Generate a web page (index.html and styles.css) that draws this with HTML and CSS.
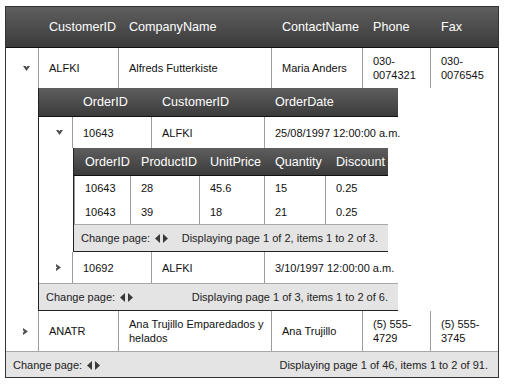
FILE: index.html
```html
<!DOCTYPE html>
<html lang="en">
<head>
    <meta charset="UTF-8">
    <meta name="viewport" content="width=device-width, initial-scale=1.0">
    <title>Customers - hierarchy grid</title>
    <link rel="stylesheet" href="styles.css">
</head>
<body>
    <div class="page">
        <table class="grid master">
            <thead>
                <tr>
                    <th class="m-expand"></th>
                    <th class="m-cust">CustomerID</th>
                    <th class="m-comp">CompanyName</th>
                    <th class="m-contact">ContactName</th>
                    <th class="m-phone">Phone</th>
                    <th class="m-fax">Fax</th>
                </tr>
            </thead>
            <tbody>
                <tr class="row">
                    <td class="expand"><svg class="ico" width="7" height="5" viewBox="0 0 7 5"><path d="M0 0h2.6l.9 1.3.9-1.3H7L3.5 5z"/></svg></td>
                    <td>ALFKI</td>
                    <td>Alfreds Futterkiste</td>
                    <td>Maria Anders</td>
                    <td>030-0074321</td>
                    <td>030-0076545</td>
                </tr>
                <tr class="detail">
                    <td class="gap"></td>
                    <td class="holder" colspan="5">
                        <!-- orders of ALFKI -->
                        <table class="grid orders">
                            <thead>
                                <tr>
                                    <th class="o-expand"></th>
                                    <th class="o-order">OrderID</th>
                                    <th class="o-cust">CustomerID</th>
                                    <th class="o-date">OrderDate</th>
                                </tr>
                            </thead>
                            <tbody>
                                <tr class="row">
                                    <td class="expand"><svg class="ico" width="7" height="5" viewBox="0 0 7 5"><path d="M0 0h2.6l.9 1.3.9-1.3H7L3.5 5z"/></svg></td>
                                    <td>10643</td>
                                    <td>ALFKI</td>
                                    <td>25/08/1997 12:00:00 a.m.</td>
                                </tr>
                                <tr class="detail">
                                    <td class="gap"></td>
                                    <td class="holder" colspan="3">
                                        <!-- order details of 10643 -->
                                        <table class="grid items">
                                            <thead>
                                                <tr>
                                                    <th class="i-order">OrderID</th>
                                                    <th class="i-prod">ProductID</th>
                                                    <th class="i-price">UnitPrice</th>
                                                    <th class="i-qty">Quantity</th>
                                                    <th class="i-disc">Discount</th>
                                                </tr>
                                            </thead>
                                            <tbody>
                                                <tr class="row">
                                                    <td>10643</td>
                                                    <td>28</td>
                                                    <td>45.6</td>
                                                    <td>15</td>
                                                    <td>0.25</td>
                                                </tr>
                                                <tr class="row">
                                                    <td>10643</td>
                                                    <td>39</td>
                                                    <td>18</td>
                                                    <td>21</td>
                                                    <td>0.25</td>
                                                </tr>
                                                <tr>
                                                    <td class="pager" colspan="5">
                                                        <div class="pager-bar">
                                                            <span>Change page: <span class="nav"><svg width="5" height="9" viewBox="0 0 5 9"><path d="M5 0v9L0 4.5z"/></svg><svg width="5" height="9" viewBox="0 0 5 9"><path d="M0 0v9l5-4.5z"/></svg></span></span>
                                                            <span>Displaying page 1 of 2, items 1 to 2 of 3.</span>
                                                        </div>
                                                    </td>
                                                </tr>
                                            </tbody>
                                        </table>
                                    </td>
                                </tr>
                                <tr class="row">
                                    <td class="expand"><svg class="ico" width="5" height="7" viewBox="0 0 5 7"><path d="M0 0l5 3.5L0 7V4.4l1.3-.9L0 2.6z"/></svg></td>
                                    <td>10692</td>
                                    <td>ALFKI</td>
                                    <td>3/10/1997 12:00:00 a.m.</td>
                                </tr>
                                <tr>
                                    <td class="pager" colspan="4">
                                        <div class="pager-bar">
                                            <span>Change page: <span class="nav"><svg width="5" height="9" viewBox="0 0 5 9"><path d="M5 0v9L0 4.5z"/></svg><svg width="5" height="9" viewBox="0 0 5 9"><path d="M0 0v9l5-4.5z"/></svg></span></span>
                                            <span>Displaying page 1 of 3, items 1 to 2 of 6.</span>
                                        </div>
                                    </td>
                                </tr>
                            </tbody>
                        </table>
                    </td>
                </tr>
                <tr class="row">
                    <td class="expand"><svg class="ico" width="5" height="7" viewBox="0 0 5 7"><path d="M0 0l5 3.5L0 7V4.4l1.3-.9L0 2.6z"/></svg></td>
                    <td>ANATR</td>
                    <td>Ana Trujillo Emparedados y helados</td>
                    <td>Ana Trujillo</td>
                    <td>(5) 555-4729</td>
                    <td>(5) 555-3745</td>
                </tr>
                <tr>
                    <td class="pager main-pager" colspan="6">
                        <div class="pager-bar">
                            <span>Change page: <span class="nav"><svg width="5" height="9" viewBox="0 0 5 9"><path d="M5 0v9L0 4.5z"/></svg><svg width="5" height="9" viewBox="0 0 5 9"><path d="M0 0v9l5-4.5z"/></svg></span></span>
                            <span>Displaying page 1 of 46, items 1 to 2 of 91.</span>
                        </div>
                    </td>
                </tr>
            </tbody>
        </table>
    </div>
</body>
</html>
```

FILE: styles.css
```css
body { margin: 0; font-family: "Liberation Sans", Arial, sans-serif; background: #fff; color: #111; }
.page { padding: 6px 0 0 5px; }

.grid { border-collapse: separate; border-spacing: 0; table-layout: fixed; font-size: 11px; }
.grid th, .grid td { box-sizing: border-box; padding: 0; }
.grid th { background: linear-gradient(#5e5e5e, #3b3b3b); color: #fff; font-weight: normal; font-size: 12.6px; text-align: left; padding-left: 11px; white-space: nowrap; border-bottom: 1px solid #111; }
.grid td { border-left: 1px solid #9c9c9c; padding: 0 4px 0 10px; line-height: 14px; vertical-align: middle; }
.grid td.expand, .grid td.gap, .grid td.holder, .grid td.pager { border-left: none; }
.grid td.expand { padding-left: 17px; }
.grid td.holder { padding: 0; vertical-align: top; }
.ico { display: block; fill: #505050; }

/* master: customers */
.master { width: 494px; border: 1px solid #333; }
.master th { height: 41px; }
.master > tbody > .row > td { height: 40px; }
.m-expand { width: 32px; }
.m-cust { width: 80px; }
.m-comp { width: 153px; }
.m-contact { width: 91px; }
.m-phone { width: 68px; }
.m-fax { width: 68px; }

/* orders */
.orders { width: 360px; border-left: 1px solid #222; border-bottom: 1px solid #222; }
.orders th { height: 29px; }
.orders > tbody > .row > td { height: 31px; white-space: nowrap; }
.o-expand { width: 33px; }
.o-order { width: 79px; }
.o-cust { width: 113px; }
.o-date { width: 134px; }

/* order details */
.items { width: 315px; margin-left: 1px; border-left: 1px solid #222; border-bottom: 1px solid #222; }
.items th { height: 28px; }
.items .row td { height: 24px; }
.i-order { width: 56px; }
.i-prod { width: 69px; }
.i-price { width: 65px; }
.i-qty { width: 61px; }
.i-disc { width: 63px; }

/* pagers */
.grid td.pager { background: #e4e4e4; border-top: 1px solid #a8a8a8; height: 27px; padding: 0; color: #222; }
.grid td.main-pager { height: 26px; }
.pager-bar { display: flex; justify-content: space-between; align-items: center; padding: 0 10px 0 7px; white-space: nowrap; }
.nav { display: inline-flex; gap: 3px; margin-left: 2px; vertical-align: -1px; fill: #3a3a3a; }
```
